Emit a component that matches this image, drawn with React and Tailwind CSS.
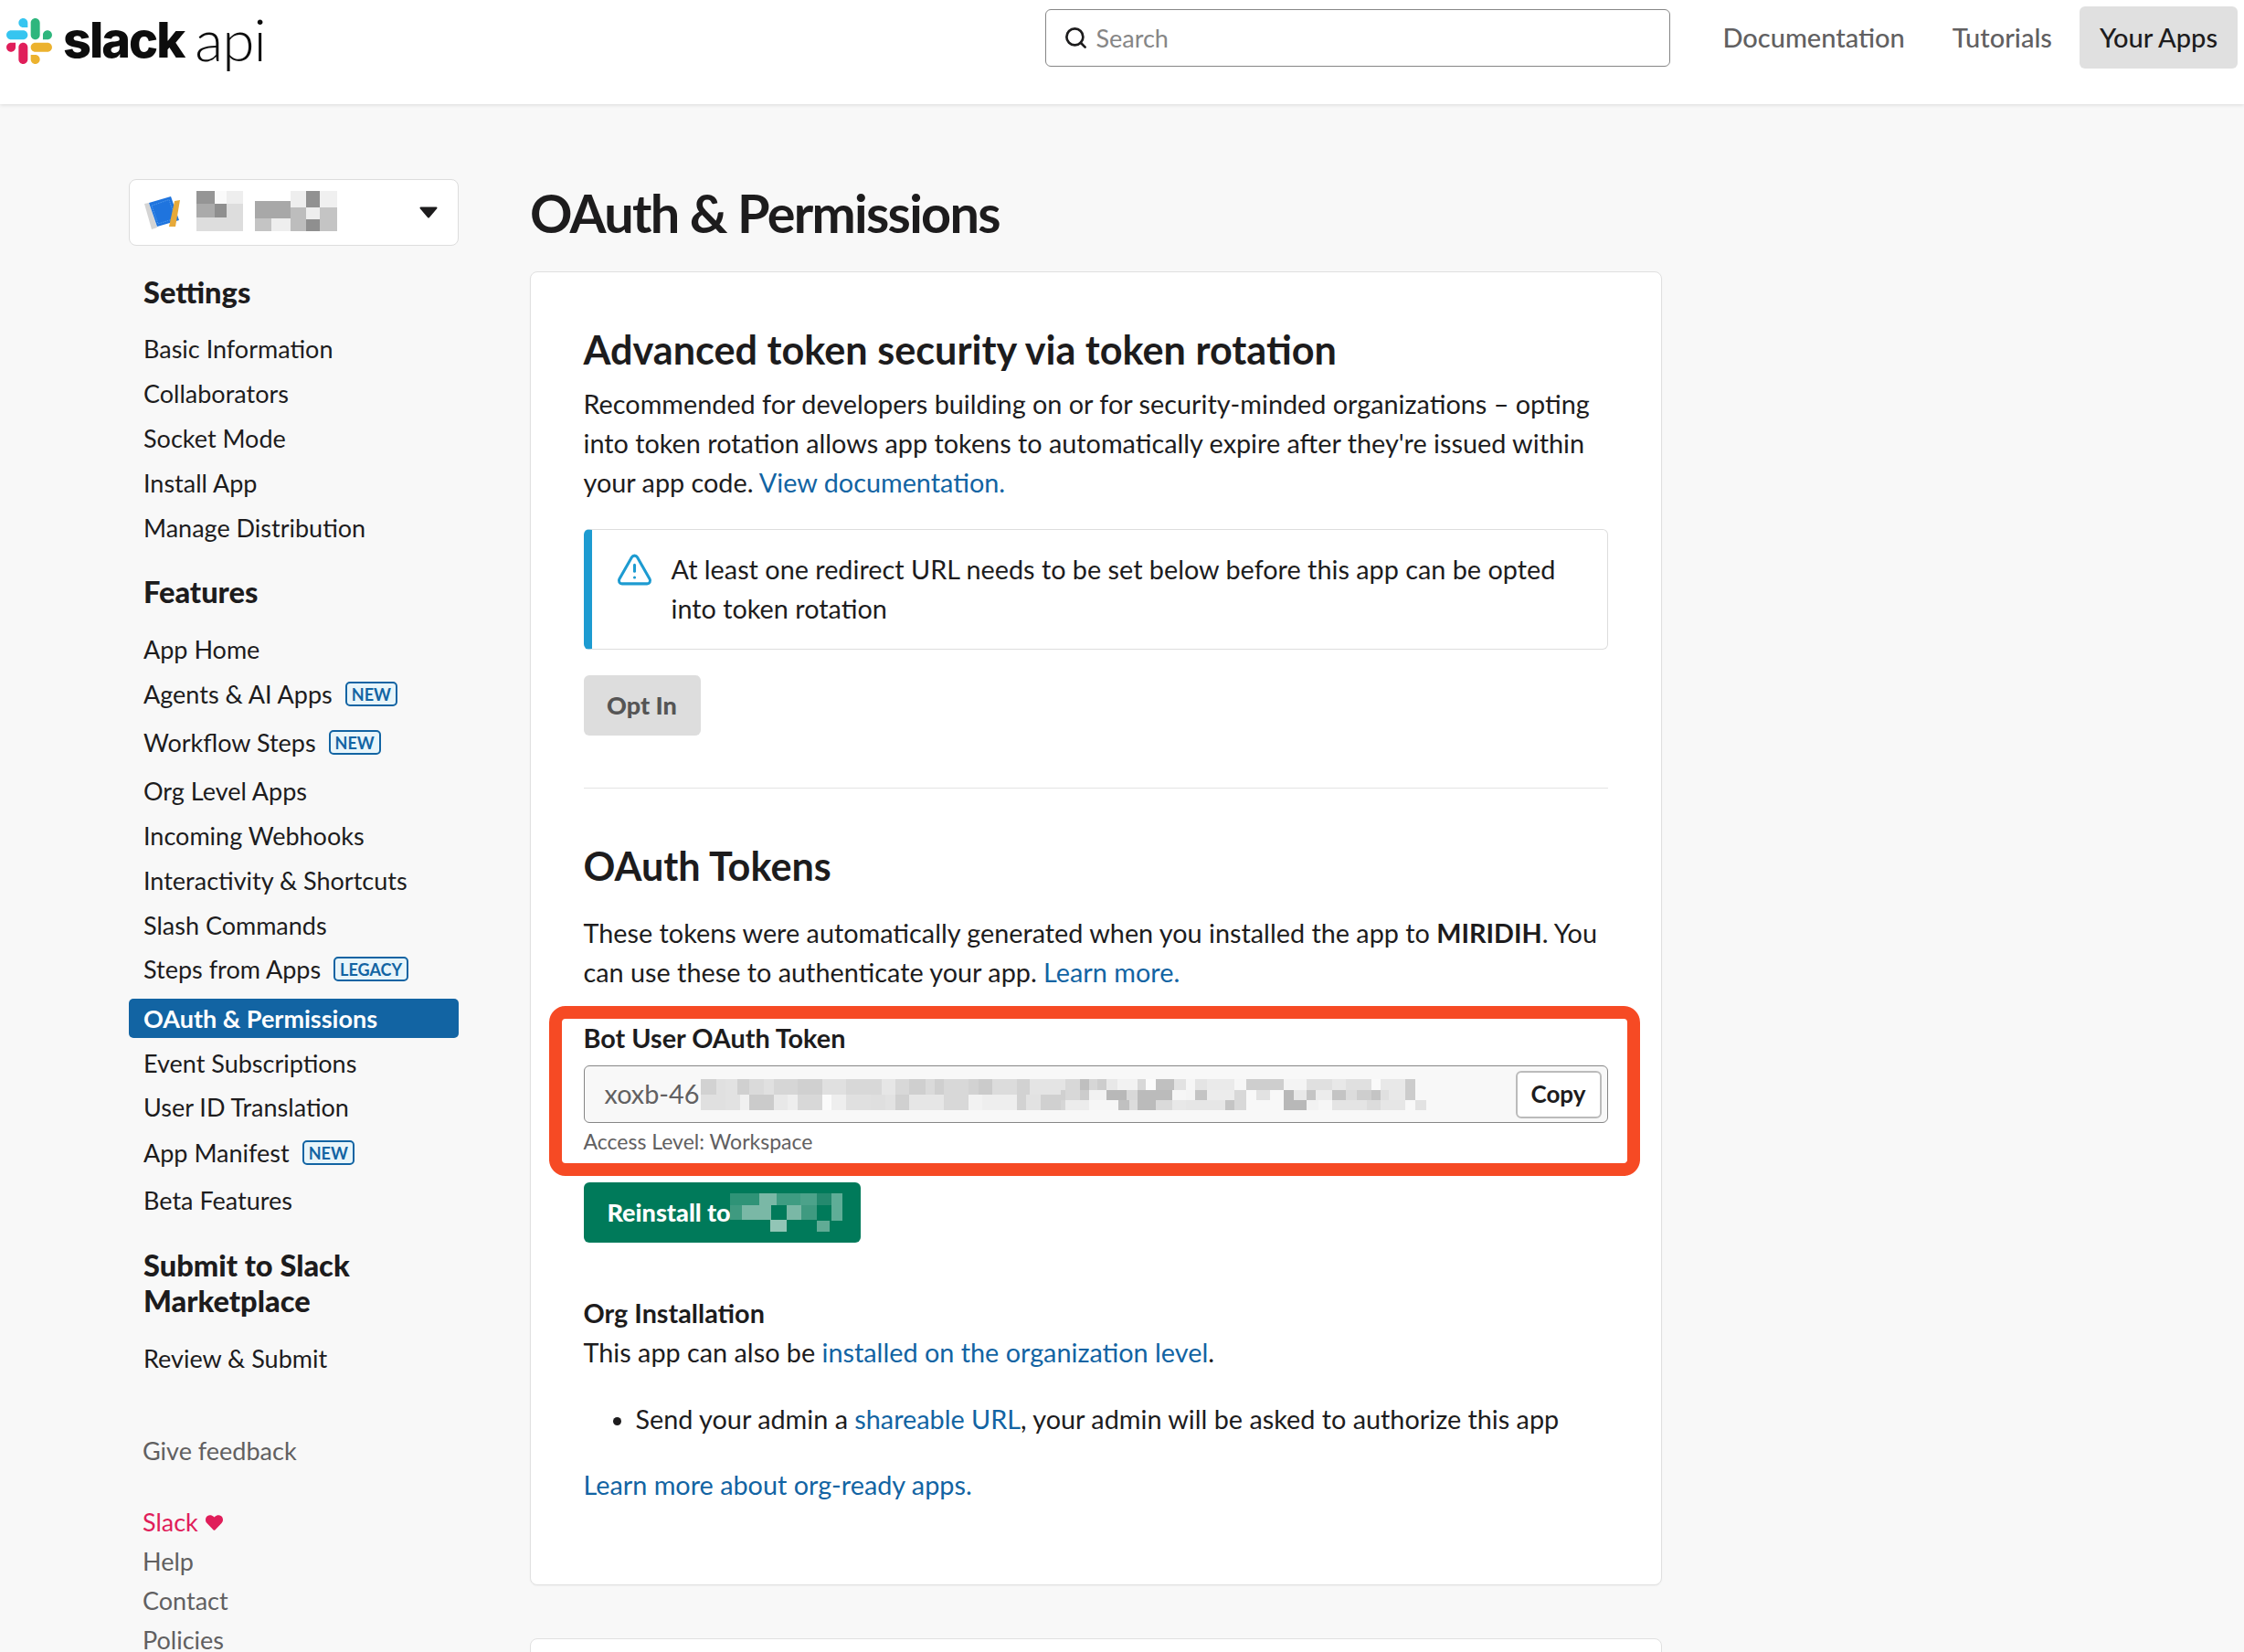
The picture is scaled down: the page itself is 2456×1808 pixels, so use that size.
import React from 'react';
import { Search, TriangleAlert } from 'lucide-react';
import { FaHeart } from 'react-icons/fa';

// token blur, in zoomed units: [from, to, fill]
const blurTop = [
  [18,68,'#d2d2d2'],[68,98,'#e0e0e0'],[98,138,'#e2e2e2'],[138,178,'#d0d0d0'],[178,225,'#dadada'],[225,258,'#e0e0e0'],[258,335,'#d6d6d6'],[335,417,'#d0d0d0'],[417,495,'#e0e0e0'],[495,612,'#d8d8d8'],[612,657,'#e6e6e6'],[657,702,'#d8d8d8'],[702,755,'#cfcfcf'],[755,785,'#dadada'],[785,815,'#cfcfcf'],[815,897,'#d8d8d8'],[897,930,'#d2d2d2'],[930,975,'#cbcbcb'],[975,1056,'#dcdcdc'],[1056,1098,'#d2d2d2'],[1098,1215,'#e4e4e4'],
];
const blurBottom = [
  [18,98,'#e0e0e0'],[98,148,'#e2e2e2'],[148,178,'#f0f0f0'],[178,258,'#cbcbcb'],[258,303,'#e8e8e8'],[303,335,'#eeeeee'],[335,417,'#d8d8d8'],[417,447,'#fbfbfb'],[447,495,'#eeeeee'],[495,575,'#e0e0e0'],[575,625,'#dfdfdf'],[625,657,'#e2e2e2'],[657,702,'#d0d0d0'],[702,815,'#e6e6e6'],[815,897,'#d8d8d8'],[897,942,'#f2f2f2'],[942,1056,'#eeeeee'],[1056,1086,'#d2d2d2'],[1086,1134,'#e2e2e2'],[1134,1200,'#d0d0d0'],
];
const blur2Top = [
  [0,15,'#e4e4e4'],[15,63,'#d8d8d8'],[63,93,'#bfbfbf'],[93,120,'#d6d6d6'],[120,150,'#cdcdcd'],[150,186,'#e8e8e8'],[186,252,'#f2f2f2'],[252,279,'#d8d8d8'],[279,312,'#fbfbfb'],[312,372,'#c0c0c0'],[372,411,'#e2e2e2'],[411,441,'#f6f6f6'],[441,480,'#e4e4e4'],[480,570,'#eaeaea'],[570,609,'#f6f6f6'],[609,732,'#cecece'],[732,807,'#f4f4f4'],[807,891,'#e0e0e0'],[891,936,'#e8e8e8'],[936,1020,'#e0e0e0'],[1020,1050,'#fafafa'],[1050,1131,'#e8e8e8'],[1131,1164,'#cccccc'],
];
const blur2Mid = [
  [0,15,'#d0d0d0'],[15,63,'#d8d8d8'],[63,93,'#cccccc'],[93,150,'#f2f2f2'],[150,216,'#b8b8b8'],[216,252,'#d8d8d8'],[252,366,'#bbbbbb'],[366,411,'#f6f6f6'],[411,441,'#f4f4f4'],[441,480,'#c4c4c4'],[480,570,'#ececec'],[570,609,'#d8d8d8'],[609,642,'#f8f8f8'],[642,687,'#e2e2e2'],[687,732,'#f8f8f8'],[732,765,'#b8b8b8'],[765,807,'#e8e8e8'],[807,837,'#c4c4c4'],[837,891,'#ececec'],[891,936,'#c4c4c4'],[936,972,'#dcdcdc'],[972,1020,'#cecece'],[1020,1050,'#c4c4c4'],[1050,1077,'#e0e0e0'],[1077,1131,'#e8e8e8'],[1131,1164,'#cccccc'],
];
const blur2Bottom = [
  [0,15,'#d6d6d6'],[15,93,'#ececec'],[93,189,'#f6f6f6'],[189,225,'#c0c0c0'],[225,252,'#dcdcdc'],[252,312,'#bbbbbb'],[312,366,'#dadada'],[366,411,'#e8e8e8'],[411,540,'#e6e6e6'],[540,570,'#c4c4c4'],[570,609,'#d8d8d8'],[609,732,'#f8f8f8'],[732,807,'#b8b8b8'],[807,846,'#f2f2f2'],[846,891,'#f6f6f6'],[891,1005,'#e4e4e4'],[1005,1050,'#dcdcdc'],[1050,1131,'#e6e6e6'],[1131,1164,'#f8f8f8'],[1164,1200,'#e2e2e2'],
];

const TokenBlur = () => (
  <svg width="800" height="34" viewBox="0 21 2400 102" className="shrink-0 block" shapeRendering="crispEdges">
    {blurTop.map(([a, b, c]) => <rect key={a} x={a} y="21" width={b - a} height="50" fill={c} />)}
    {blurBottom.map(([a, b, c]) => <rect key={a} x={a} y="71" width={b - a} height="52" fill={c} />)}
    {blur2Top.map(([a, b, c]) => <rect key={a} x={a + 1200} y="21" width={b - a} height="36" fill={c} />)}
    {blur2Mid.map(([a, b, c]) => <rect key={a} x={a + 1200} y="57" width={b - a} height="33" fill={c} />)}
    {blur2Bottom.map(([a, b, c]) => <rect key={a} x={a + 1200} y="90" width={b - a} height="33" fill={c} />)}
  </svg>
);

const NameBlur = () => (
  <svg width="154" height="44" viewBox="645 630 462 132" shapeRendering="crispEdges" className="block">
    <rect x="645" y="630" width="60" height="42" fill="#959595" />
    <rect x="705" y="630" width="39" height="42" fill="#fafafa" />
    <rect x="744" y="630" width="54" height="42" fill="#eeeeee" />
    <rect x="645" y="672" width="60" height="45" fill="#aaaaaa" />
    <rect x="705" y="672" width="39" height="45" fill="#8f8f8f" />
    <rect x="744" y="672" width="54" height="45" fill="#dddddd" />
    <rect x="645" y="717" width="153" height="45" fill="#dddddd" />
    <rect x="837" y="663" width="117" height="57" fill="#a8a8a8" />
    <rect x="837" y="720" width="54" height="42" fill="#c4c4c4" />
    <rect x="891" y="720" width="63" height="42" fill="#eeeeee" />
    <rect x="954" y="630" width="51" height="54" fill="#eeeeee" />
    <rect x="1005" y="630" width="45" height="54" fill="#919191" />
    <rect x="1050" y="630" width="57" height="54" fill="#f0f0f0" />
    <rect x="954" y="684" width="51" height="78" fill="#bdbdbd" />
    <rect x="1005" y="684" width="45" height="39" fill="#eeeeee" />
    <rect x="1005" y="723" width="45" height="39" fill="#8f8f8f" />
    <rect x="1050" y="684" width="57" height="78" fill="#c4c4c4" />
  </svg>
);

const ReinstallBlur = () => (
  <svg width="123" height="42" viewBox="526 655 311 125" preserveAspectRatio="none" shapeRendering="crispEdges" className="block">
    <rect x="526" y="655" width="81" height="40" fill="#2f9377" />
    <rect x="607" y="655" width="48" height="40" fill="#7ab8a6" />
    <rect x="655" y="655" width="65" height="40" fill="#3f9c82" />
    <rect x="720" y="655" width="46" height="40" fill="#4ca28a" />
    <rect x="766" y="655" width="41" height="40" fill="#24896e" />
    <rect x="807" y="655" width="30" height="90" fill="#5fad97" />
    <rect x="526" y="695" width="32" height="45" fill="#3f9a80" />
    <rect x="558" y="695" width="82" height="45" fill="#7ab8a6" />
    <rect x="682" y="695" width="40" height="45" fill="#7ab8a6" />
    <rect x="722" y="695" width="44" height="45" fill="#3f9a80" />
    <rect x="637" y="740" width="45" height="40" fill="#92c5b6" />
    <rect x="766" y="745" width="36" height="35" fill="#60ab95" />
  </svg>
);

const SlackMark = () => (
  <svg width="50" height="50" viewBox="0 0 2447.6 2452.5" className="block">
    <path d="M897.4 0c-135.3.1-244.8 109.9-244.7 245.2-.1 135.3 109.5 245.1 244.8 245.2h244.8V245.3c.1-135.3-109.5-245.1-244.9-245.3.1 0 .1 0 0 0m0 654H244.8C109.5 654.1-.1 763.9 0 899.2c-.2 135.3 109.4 245.1 244.7 245.3h652.7c135.3-.1 244.9-109.9 244.8-245.2.1-135.4-109.5-245.2-244.8-245.3z" fill="#36c5f0" />
    <path d="M2447.6 899.2c.1-135.3-109.5-245.1-244.8-245.2-135.3.1-244.9 109.9-244.8 245.2v245.3h244.8c135.3-.1 244.9-109.9 244.8-245.3zm-652.7 0V245.2C1795 110 1685.5.2 1550.2 0c-135.3.1-244.9 109.9-244.8 245.2v654c-.2 135.3 109.4 245.1 244.7 245.3 135.3-.1 244.9-109.9 244.8-245.3z" fill="#2eb67d" />
    <path d="M1550.1 2452.5c135.3-.1 244.9-109.9 244.8-245.2.1-135.3-109.5-245.1-244.8-245.2h-244.8v245.2c-.1 135.2 109.5 245 244.8 245.2zm0-654.1h652.7c135.3-.1 244.9-109.9 244.8-245.2.2-135.3-109.4-245.1-244.7-245.3h-652.7c-135.3.1-244.9 109.9-244.8 245.2-.1 135.4 109.4 245.2 244.7 245.3z" fill="#ecb22e" />
    <path d="M0 1553.2c-.1 135.3 109.5 245.1 244.8 245.2 135.3-.1 244.9-109.9 244.8-245.2v-245.2H244.8c-135.3.1-244.9 109.9-244.8 245.2zm652.7 0v654c-.2 135.3 109.4 245.1 244.7 245.3 135.3-.1 244.9-109.9 244.8-245.3v-653.9c.2-135.3-109.4-245.1-244.7-245.3-135.4 0-244.8 109.8-244.8 245.1 0 0 0 .1 0 0z" fill="#e01e5a" />
  </svg>
);

const AppIcon = () => (
  <svg width="40" height="40" viewBox="157 214 40 40" className="block">
    <polygon points="158,224 163,223 172,250 166,252" fill="#d4d4d4" />
    <polygon points="163,223 187,216 196,242 172,249" fill="#1f74de" />
    <polygon points="166,226 185,219.500 192,240 173,246" fill="none" stroke="#6fb0f2" strokeWidth="0.6" strokeDasharray="1.5 1" />
    <polygon points="191,221 197,220 192,249 185,249" fill="#e6a93a" />
  </svg>
);

const Badge = ({ children }) => (
  <span className="ml-[14px] inline-flex h-[27px] items-center rounded-[5px] border-2 border-[#1264a3] bg-[#e8f5fa] px-[5px] text-[18px] leading-none font-bold text-[#1264a3]">
    {children}
  </span>
);

const NavItem = ({ label, badge, active, className = 'mb-[6px]' }) => (
  <a className={`flex h-[43px] items-center rounded-[5px] pl-[16px] text-[27px] leading-[43px] ${active ? 'bg-[#1264a3] font-bold text-white' : 'text-[#1d1c1d]'} ${className}`}>
    {label}
    {badge && <Badge>{badge}</Badge>}
  </a>
);

const Sidebar = () => (
  <aside className="ml-[141px] w-[361px] shrink-0 pt-[82px]">
    <div className="flex h-[73px] items-center rounded-[8px] border border-[#dddddd] bg-white pl-[15px] pr-[22px]">
      <AppIcon />
      <div className="ml-[18px] -mt-[4px]"><NameBlur /></div>
      <svg width="20" height="13" viewBox="0 0 20 13" className="ml-auto block">
        <path d="M1.500 1.500h17l-8.500 10z" fill="#1d1c1d" stroke="#1d1c1d" strokeWidth="2" strokeLinejoin="round" />
      </svg>
    </div>

    <h3 className="mt-[31px] pl-[16px] text-[32.600px] leading-[40px] font-black text-[#1d1c1d]">Settings</h3>
    <nav className="mt-[20px]">
      <NavItem label="Basic Information" />
      <NavItem label="Collaborators" />
      <NavItem label="Socket Mode" />
      <NavItem label="Install App" />
      <NavItem label="Manage Distribution" />
    </nav>

    <h3 className="mt-[29px] pl-[16px] text-[32.600px] leading-[40px] font-black text-[#1d1c1d]">Features</h3>
    <nav className="mt-[21px]">
      <NavItem label="App Home" />
      <NavItem label="Agents & AI Apps" badge="NEW" className="mb-[10px]" />
      <NavItem label="Workflow Steps" badge="NEW" className="mb-[10px]" />
      <NavItem label="Org Level Apps" />
      <NavItem label="Incoming Webhooks" />
      <NavItem label="Interactivity & Shortcuts" />
      <NavItem label="Slash Commands" className="mb-[5px]" />
      <NavItem label="Steps from Apps" badge="LEGACY" className="mb-[11px]" />
      <NavItem label="OAuth & Permissions" active className="mb-[6px]" />
      <NavItem label="Event Subscriptions" className="mb-[5px]" />
      <NavItem label="User ID Translation" className="mb-[7px]" />
      <NavItem label="App Manifest" badge="NEW" className="mb-[9px]" />
      <NavItem label="Beta Features" className="mb-0" />
    </nav>

    <h3 className="mt-[30px] pl-[16px] text-[32.600px] leading-[39px] font-black text-[#1d1c1d]">Submit to Slack<br />Marketplace</h3>
    <nav className="mt-[22px]">
      <NavItem label="Review & Submit" className="mb-0" />
    </nav>

    <div className="mt-[58px] pl-[15px] text-[27px] leading-[43px] text-[#616061]">Give feedback</div>
    <ul className="mt-[35px] pl-[15px] text-[27px] leading-[43px] text-[#616061]">
      <li className="flex items-center gap-[8px] text-[#e01e5a]">Slack <FaHeart className="mt-[2px] text-[19px]" /></li>
      <li>Help</li>
      <li>Contact</li>
      <li>Policies</li>
    </ul>
  </aside>
);

const Header = () => (
  <header className="relative z-10 flex h-[114px] shrink-0 items-start bg-white shadow-[0_1px_4px_rgba(0,0,0,0.12)]">
    <div className="ml-[7px] mt-[20px] flex items-start">
      <SlackMark />
      <span className="ml-[12px] -mt-[13px] font-[family-name:Inter,sans-serif] text-[54px] leading-[74px] font-extrabold tracking-[-2px] text-[#0d0d0d]">slack</span>
      <span className="ml-[12px] -mt-[14px] text-[64px] leading-[74px] font-light tracking-[-1px] text-[#0d0d0d]">api</span>
    </div>
    <div className="ml-auto mt-[10px] flex h-[63px] w-[684px] items-center rounded-[6px] border border-[#868686] bg-white pl-[19px] text-[27px] text-[#868686]">
      <Search size={27} strokeWidth={2.4} className="text-[#1d1c1d]" />
      <span className="ml-[8px] pt-[2px]">Search</span>
    </div>
    <nav className="ml-[37px] mr-[7px] mt-[7px] flex items-center text-[29px] font-medium text-[#616061]">
      <a className="flex h-[68px] items-center px-[20px]">Documentation</a>
      <a className="ml-[12px] flex h-[68px] items-center px-[20px]">Tutorials</a>
      <a className="ml-[10px] flex h-[68px] items-center rounded-[6px] bg-[#e0e0e0] px-[22px] text-[#1d1c1d]">Your Apps</a>
    </nav>
  </header>
);

const link = 'text-[#1264a3]';

const MainCard = () => (
  <section className="mt-[29px] rounded-[8px] border border-[#e0e0e0] bg-white pl-[57.500px] pr-[58.500px] pt-[57px] pb-[87px] shadow-[0_1px_2px_rgba(0,0,0,0.04)] text-[28.800px] leading-[43.200px] text-[#1d1c1d]">
    <h2 className="text-[43.200px] leading-[54px] font-bold">Advanced token security via token rotation</h2>
    <p className="mt-[12px]">
      Recommended for developers building on or for security-minded organizations – opting into token rotation allows app tokens to automatically expire after they're issued within your app code. <a className={link}>View documentation.</a>
    </p>
    <div className="mt-[28px] flex h-[132px] rounded-[6px] border border-l-[9px] border-[#dddddd] border-l-[#1d9bd1] pl-[26px] pr-[40px] pt-[22px]">
      <TriangleAlert size={41} strokeWidth={1.8} className="mt-[1px] shrink-0 text-[#1d9bd1]" />
      <p className="ml-[20px]">At least one redirect URL needs to be set below before this app can be opted into token rotation</p>
    </div>
    <button className="mt-[28px] block h-[66px] w-[128px] rounded-[6px] bg-[#dddddd] text-[27px] font-black text-[#555555]">Opt In</button>
    <hr className="mt-[57px] border-[#e4e4e4]" />
    <h2 className="mt-[56px] text-[43.200px] leading-[56px] font-bold">OAuth Tokens</h2>
    <p className="mt-[25px]">
      These tokens were automatically generated when you installed the app to <b>MIRIDIH</b>. You can use these to authenticate your app. <a className={link}>Learn more.</a>
    </p>

    <div className="relative mt-[32px]">
      <div className="text-[28.800px] leading-[36px] font-bold">Bot User OAuth Token</div>
      <div className="mt-[12px] flex h-[63px] items-center rounded-[6px] border border-[#868686] bg-[#f8f8f8] pl-[22px] pr-[6px]">
        <span className="w-[99px] shrink-0 whitespace-nowrap text-[#616061]">xoxb-46</span>
        <TokenBlur />
        <button className="ml-auto h-[52px] w-[94px] rounded-[6px] border-2 border-[#bbbbbb] bg-white text-[26px] font-bold text-[#1d1c1d]">Copy</button>
      </div>
      <div className="mt-[5px] text-[23px] leading-[30px] text-[#616061]">Access Level: Workspace</div>
      {/* annotation drawn over the screenshot */}
      <div className="pointer-events-none absolute -top-[17px] -left-[38px] -right-[35px] -bottom-[23px] rounded-[18px] border-[14px] border-[#f64a24]" />
    </div>

    <button className="mt-[30px] flex h-[66px] w-[303px] items-center rounded-[6px] bg-[#007a5a] pl-[26px] text-[27px] font-black text-white">
      Reinstall to
      <span className="-ml-[1px]"><ReinstallBlur /></span>
    </button>

    <h4 className="mt-[56px] font-bold">Org Installation</h4>
    <p>This app can also be <a className={link}>installed on the organization level</a>.</p>
    <ul className="mt-[30px] list-disc pl-[57px]">
      <li>Send your admin a <a className={link}>shareable URL</a>, your admin will be asked to authorize this app</li>
    </ul>
    <p className="mt-[28px]"><a className={link}>Learn more about org-ready apps.</a></p>
  </section>
);

export default function App() {
  return (
    <div className="flex h-[1808px] flex-col overflow-hidden bg-[#f8f8f8] font-[family-name:Lato,sans-serif]">
      <Header />
      <div className="flex">
        <Sidebar />
        <main className="ml-[78px] w-[1239px] shrink-0 pt-[84px]">
          <h1 className="text-[57.600px] leading-[70px] font-bold tracking-[-1.700px] text-[#1d1c1d]">OAuth &amp; Permissions</h1>
          <MainCard />
          <section className="mt-[58px] h-[200px] rounded-[8px] border border-[#e0e0e0] bg-white" />
        </main>
      </div>
    </div>
  );
}
